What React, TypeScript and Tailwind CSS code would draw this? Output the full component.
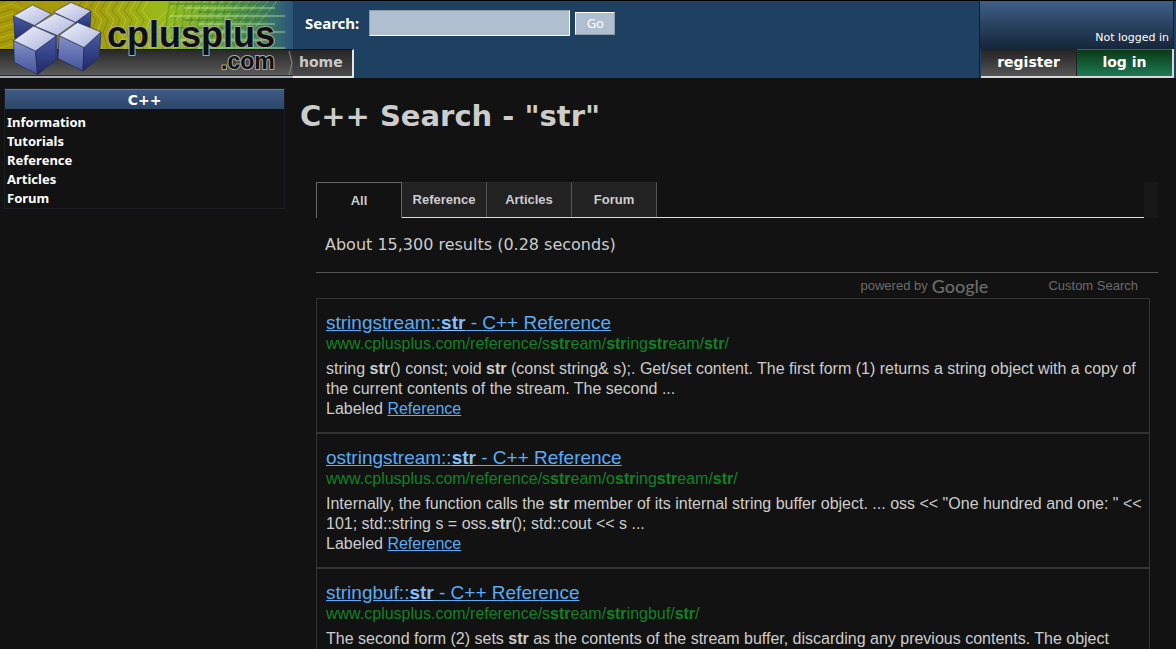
import React from 'react';

const verdana = "font-['DejaVu_Sans','Verdana',sans-serif]";
const arial = "font-['Liberation_Sans','Arial',sans-serif]";
const noto = "font-['Noto_Sans','Open_Sans',sans-serif]";

type Result = { title: string; url: string; lines: string };

const results: Result[] = [
  {
    title: 'stringstream::*str* - C++ Reference',
    url: 'www.cplusplus.com/reference/s*str*eam/*str*ing*str*eam/*str*/',
    lines:
      'string *str*() const; void *str* (const string& s);. Get/set content. The first form (1) returns a string object with a copy of the current contents of the stream. The second ...',
  },
  {
    title: 'ostringstream::*str* - C++ Reference',
    url: 'www.cplusplus.com/reference/s*str*eam/o*str*ing*str*eam/*str*/',
    lines:
      'Internally, the function calls the *str* member of its internal string buffer object. ... oss << "One hundred and one: " << 101; std::string s = oss.*str*(); std::cout << s ...',
  },
  {
    title: 'stringbuf::*str* - C++ Reference',
    url: 'www.cplusplus.com/reference/s*str*eam/*str*ingbuf/*str*/',
    lines:
      'The second form (2) sets *str* as the contents of the stream buffer, discarding any previous contents. The object',
  },
];

function Marked({ text }: { text: string }) {
  return (
    <>
      {text.split('*').map((part, i) => (i % 2 ? <b key={i} className="font-bold">{part}</b> : part))}
    </>
  );
}

function Logo() {
  const traces = Array.from({ length: 12 }, (_, i) => i);
  return (
    <svg viewBox="0 0 293 77" className="block h-[77px] w-[293px]" role="img" aria-label="cplusplus.com">
      <defs>
        <linearGradient id="board" x1="0" x2="1" y1="0" y2="0">
          <stop offset="0" stopColor="#a89a08" />
          <stop offset=".3" stopColor="#a59a0c" />
          <stop offset=".55" stopColor="#9aba18" />
          <stop offset=".75" stopColor="#6fa83a" />
          <stop offset=".9" stopColor="#3f7f62" />
          <stop offset="1" stopColor="#2a527c" />
        </linearGradient>
        <linearGradient id="bar" x1="0" x2="0" y1="0" y2="1">
          <stop offset="0" stopColor="#262626" />
          <stop offset="1" stopColor="#5c5c5c" />
        </linearGradient>
        <linearGradient id="top" x1="0" x2="1" y1="0" y2="1">
          <stop offset="0" stopColor="#f4f5fd" />
          <stop offset="1" stopColor="#a9b2dc" />
        </linearGradient>
        <linearGradient id="left" x1="0" x2="0" y1="0" y2="1">
          <stop offset="0" stopColor="#8390cb" />
          <stop offset="1" stopColor="#45549a" />
        </linearGradient>
        <linearGradient id="right" x1="0" x2="0" y1="0" y2="1">
          <stop offset="0" stopColor="#4a5ba6" />
          <stop offset="1" stopColor="#1e2a66" />
        </linearGradient>
      </defs>
      <rect width="293" height="49" fill="url(#board)" />
      <g fill="none" strokeWidth="1">
        {traces.map((i) => (
          <path key={i} d={`M${82 + i * 6} 0l-6 10 8 9-5 12 5 18`} stroke={i % 2 ? '#e2e34a' : '#5d6a08'} opacity=".45" />
        ))}
        {traces.map((i) => (
          <path key={`d${i}`} d={`M${134 + i * 10} 40L${178 + i * 9} 0`} stroke="#dcee52" opacity=".4" />
        ))}
        {traces.map((i) => (
          <path key={`v${i}`} d={`M${170 + i * 8} 0l-8 49`} stroke="#2f7a30" strokeWidth="2" opacity=".3" />
        ))}
        {traces.map((i) => (
          <path key={`h${i}`} d={`M${170 + (i % 3) * 14} ${3 + i * 4}H${270 + (i % 4) * 5}`} stroke={i % 2 ? '#c3f0a0' : '#277332'} strokeWidth="1.500" opacity=".5" />
        ))}
        {traces.map((i) => (
          <path key={`l${i}`} d={`M0 ${2 + i * 5}l12 -4 10 5`} stroke={i % 2 ? '#e0d93a' : '#5d5a08'} opacity=".35" />
        ))}
      </g>
      <rect y="48" width="293" height="27" fill="url(#bar)" />
      <rect y="48" width="293" height="1" fill="#111" />
      <rect y="74" width="293" height="1" fill="#2a2a30" />
      <rect y="75" width="293" height="2" fill="#a6abb8" />
      <path d="M289 50l3 12-3 12" fill="none" stroke="#8b8b8b" />
      <g stroke="#1d2450" strokeWidth=".6" strokeLinejoin="round">
        <path d="M13.500 15L34 25V41L15 39z" fill="url(#right)" />
        <path d="M13.500 15L32.500 4 51.500 13 34.500 24.500z" fill="url(#top)" />
        <path d="M75.500 21.500L91 10l-1 18-14 2z" fill="url(#right)" />
        <path d="M53.500 11L71 1.500 91 10 75.500 21.500z" fill="url(#top)" />
        <path d="M34.500 25L57 34.500V57L50 59 36 39z" fill="url(#left)" />
        <path d="M34.500 25L55 12.500 75.500 21.500 57.500 34.500z" fill="url(#top)" />
        <path d="M13.500 39.500L35.500 50l2 23.500L14.500 61.500z" fill="url(#left)" />
        <path d="M35.500 50L56 35v24L37.500 73.500z" fill="url(#right)" />
        <path d="M13.500 39.500L33.500 25 56 35 35.500 50z" fill="url(#top)" />
        <path d="M59 34.500L84 46.500 83 70 58 57.500z" fill="url(#left)" />
        <path d="M84 46.500L101 31 99.500 56 83 70z" fill="url(#right)" />
        <path d="M59 34.500L77.500 21.500 101 31 84 46.500z" fill="url(#top)" />
      </g>
      <g className="font-['Liberation_Sans',sans-serif] font-bold" fill="#101010" stroke="#a9ab9f" strokeWidth="2" paintOrder="stroke" strokeLinejoin="round">
        <text x="107" y="46" fontSize="36">cplusplus</text>
        <text x="221" y="68" fontSize="23">.com</text>
      </g>
    </svg>
  );
}

function Header() {
  return (
    <header className={`flex h-[78px] border-t border-black bg-[#1f4161] ${verdana}`}>
      <a href="#home" className="shrink-0"><Logo /></a>
      <div className="flex grow flex-col">
        <form className="flex h-12 items-center pb-1 pl-3 text-white" onSubmit={(e) => e.preventDefault()}>
          <label htmlFor="q" className={`mr-2.5 text-[15px] font-bold ${noto}`}>Search:</label>
          <input id="q" type="text" className="mr-[5px] h-[26px] w-[201px] border border-t-[#8d9aa8] border-l-[#8d9aa8] border-r-white border-b-white bg-[#b0bfcf] px-1 text-sm text-black outline-none" />
          <button type="submit" className={`h-[23px] w-10 border border-t-white border-l-white border-r-[#8d9aa8] border-b-[#8d9aa8] bg-[#b0bfcf] text-[13px] leading-5 text-white ${noto}`}>Go</button>
        </form>
        <nav className="flex">
          <a href="#home" className="flex h-[29px] w-[61px] items-center border-t border-r-2 border-b-2 border-t-[#111] border-r-[#e5e5e5] border-b-[#e5e5e5] bg-linear-to-b from-[#262626] to-[#4c4c4c] pb-0.5 pl-1.5 text-sm font-bold text-[#c9c9c9]">home</a>
        </nav>
      </div>
      <div className="mr-[2px] flex w-[195px] flex-col border-l border-[#0d2136]">
        <div className="flex h-12 items-end justify-end border-r border-[#0d2136] bg-linear-to-b from-[#3f6089] to-[#16263a] pr-1 pb-[3px] text-[11px] text-white">Not logged in</div>
        <div className="ml-px flex h-[29px] border-r-2 border-b-2 border-[#d8d8d8] text-sm font-bold text-white">
          <a href="#register" className="flex flex-1 items-center justify-center border-t border-r border-[#222] bg-linear-to-b from-[#242424] to-[#565656] pb-0.5">register</a>
          <a href="#login" className="flex flex-1 items-center justify-center border-t border-[#2c6b45] bg-linear-to-b from-[#0a3a16] to-[#1f7a55] pb-0.5">log in</a>
        </div>
      </div>
    </header>
  );
}

function Sidebar() {
  return (
    <aside className="mt-2.5 ml-1 w-[281px] shrink-0 self-start border border-[#1b1f24]">
      <h2 className={`h-5 border-t border-[#5c7ba0] bg-linear-to-b from-[#3d5b86] to-[#2c4668] text-center text-sm leading-5 font-bold text-white ${verdana}`}>C++</h2>
      <ul className={`pt-1 pl-0.5 text-[13px] leading-[19px] font-bold text-white ${noto}`}>
        {['Information', 'Tutorials', 'Reference', 'Articles', 'Forum'].map((item) => (
          <li key={item}><a href={`#${item}`}>{item}</a></li>
        ))}
      </ul>
    </aside>
  );
}

function Tabs() {
  return (
    <div className={`flex h-9 ${arial}`}>
      <button className="w-[86px] border-t border-r border-l border-[#666] text-[13px] font-bold text-[#ccc]">All</button>
      <div className="flex grow border-b border-[#ddd]">
        {['Reference', 'Articles', 'Forum'].map((tab) => (
          <button key={tab} className="w-[85px] border-t border-r border-t-[#2c2c2c] border-r-[#555] bg-[#222] text-[13px] font-bold text-[#ccc]">{tab}</button>
        ))}
      </div>
      <div className="w-[14px] bg-[#181818]" />
    </div>
  );
}

function ResultItem({ result }: { result: Result }) {
  return (
    <article className="h-[135px] border-b-2 border-[#333] pt-3.5 pr-1 pl-[9px]">
      <h3 className="text-[19px] leading-5"><a href="#result" className="text-[#5aabf5] underline [&_b]:text-[#82c0ff] [&_b]:underline"><Marked text={result.title} /></a></h3>
      <div className="mt-px text-base leading-5 text-[#128026]"><Marked text={result.url} /></div>
      <p className="mt-[5px] text-base leading-5 text-[#ccc]"><Marked text={result.lines} /></p>
      <div className="text-base leading-5 text-[#ccc]">Labeled <a href="#label" className="text-[#5aabf5] underline">Reference</a></div>
    </article>
  );
}

export default function App() {
  return (
    <div className="flex h-screen flex-col overflow-hidden bg-[#121212]">
      <Header />
      <div className="flex">
        <Sidebar />
        <main className="min-w-0 grow pt-5 pr-[18px] pl-[15px]">
          <h1 className={`h-[84px] text-[29px] leading-9 font-bold text-[#ccc] ${verdana}`}>C++ Search - "str"</h1>
          <div className="ml-4">
            <Tabs />
            <div className={`h-[55px] border-b border-[#555] pl-[9px] text-base leading-[54px] text-[#ccc] ${verdana}`}>About 15,300 results (0.28 seconds)</div>
            <div className={`flex h-[25px] items-center justify-end pr-5 text-[13px] text-[#6b6b6b] ${arial}`}>
              <span>powered by</span>
              <span className="ml-1 font-['Lato',sans-serif] text-[18px] leading-6 font-medium">Google</span>
              <span className="ml-[60px]">Custom Search</span>
            </div>
            <section className={`mr-2 border border-[#333] ${arial}`}>
              {results.map((r) => <ResultItem key={r.title} result={r} />)}
            </section>
          </div>
        </main>
      </div>
    </div>
  );
}
